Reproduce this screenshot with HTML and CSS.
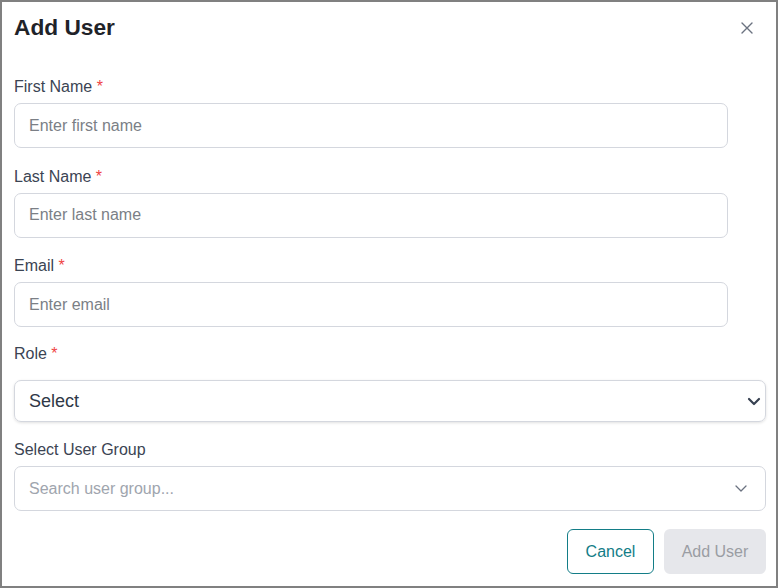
FILE: index.html
```html
<!DOCTYPE html>
<html lang="en">
<head>
    <meta charset="UTF-8">
    <meta name="viewport" content="width=device-width, initial-scale=1.0">
    <title>Add User</title>
    <link rel="stylesheet" href="styles.css">
</head>
<body>
    <div class="modal">
        <div class="modal-header">
            <h2>Add User</h2>
            <button class="close-btn" type="button" aria-label="Close">
                <svg width="12" height="12" viewBox="0 0 12 12"><path d="M1 1L11 11M11 1L1 11" stroke="#6b7280" stroke-width="1.4" stroke-linecap="round"/></svg>
            </button>
        </div>

        <form class="user-form">
            <div class="form-group">
                <label for="firstName">First Name <span class="req">*</span></label>
                <input type="text" id="firstName" placeholder="Enter first name">
            </div>
            <div class="form-group">
                <label for="lastName">Last Name <span class="req">*</span></label>
                <input type="text" id="lastName" placeholder="Enter last name">
            </div>
            <div class="form-group">
                <label for="email">Email <span class="req">*</span></label>
                <input type="text" id="email" placeholder="Enter email">
            </div>
            <div class="form-group role-group">
                <label for="role">Role <span class="req">*</span></label>
                <div class="select-box">
                    <span>Select</span>
                    <svg width="14" height="9" viewBox="0 0 14 9"><path d="M2 2L7 7L12 2" fill="none" stroke="#374151" stroke-width="2.2" stroke-linecap="round" stroke-linejoin="round"/></svg>
                </div>
            </div>
            <div class="form-group">
                <label for="userGroup">Select User Group</label>
                <div class="search-box">
                    <span>Search user group...</span>
                    <svg width="14" height="9" viewBox="0 0 14 9"><path d="M2 2L7 7L12 2" fill="none" stroke="#6b7280" stroke-width="1.3" stroke-linecap="round" stroke-linejoin="round"/></svg>
                </div>
            </div>

            <div class="actions">
                <button type="button" class="btn btn-cancel">Cancel</button>
                <button type="button" class="btn btn-add" disabled>Add User</button>
            </div>
        </form>
    </div>
</body>
</html>
```

FILE: styles.css
```css
html, body {
    margin: 0;
    padding: 0;
}
body {
    font-family: "Liberation Sans", Arial, sans-serif;
    background-color: #fff;
}
.modal {
    box-sizing: border-box;
    width: 778px;
    height: 588px;
    border: 2px solid #808080;
    padding: 12px 10px 12px 12px;
    background: #fff;
}
.modal-header {
    display: flex;
    justify-content: space-between;
    align-items: center;
    height: 26px;
}
.modal-header h2 {
    margin: 0;
    font-size: 22.7px;
    font-weight: bold;
    color: #1f2329;
}
.close-btn {
    border: none;
    background: none;
    padding: 0;
    margin-right: 13px;
    margin-top: 1px;
    display: flex;
    cursor: pointer;
}
.user-form {
    margin-top: 36px;
}
.form-group {
    margin-bottom: 17.5px;
}
.form-group label {
    display: block;
    height: 20px;
    line-height: 20px;
    padding-top: 1px;
    font-size: 16px;
    color: #3b4453;
    margin-bottom: 6px;
}
.req {
    color: #ef4444;
}
.form-group input {
    box-sizing: border-box;
    width: 714px;
    height: 45px;
    padding: 0 14px;
    border: 1px solid #d4d7de;
    border-radius: 7px;
    font-family: inherit;
    font-size: 16px;
    color: #374151;
    outline: none;
}
.form-group input::placeholder {
    color: #7b7f86;
}
.role-group {
    margin-top: -2px;
    margin-bottom: 17px;
}
.role-group label {
    margin-bottom: 16.5px;
}
.select-box {
    box-sizing: border-box;
    height: 42px;
    display: flex;
    align-items: center;
    justify-content: space-between;
    padding: 0 4px 0 14px;
    border: 1px solid #d4d7de;
    border-radius: 7px;
    box-shadow: 0 1px 3px rgba(0, 0, 0, 0.12);
    font-size: 18px;
    color: #2f3847;
}
.search-box {
    box-sizing: border-box;
    height: 45px;
    display: flex;
    align-items: center;
    justify-content: space-between;
    padding: 0 17px 0 14px;
    border: 1px solid #d4d7de;
    border-radius: 7px;
    font-size: 16px;
    color: #a0a5ae;
}
.actions {
    display: flex;
    justify-content: flex-end;
    gap: 10px;
    margin-top: 18px;
}
.btn {
    box-sizing: border-box;
    height: 45px;
    border-radius: 6px;
    font-family: inherit;
    font-size: 16px;
    padding: 0;
}
.btn-cancel {
    width: 87px;
    background: #fff;
    border: 1px solid #137d87;
    color: #137d87;
    cursor: pointer;
}
.btn-add {
    width: 102px;
    background: #e6e7eb;
    border: none;
    color: #9a9da3;
}
```
